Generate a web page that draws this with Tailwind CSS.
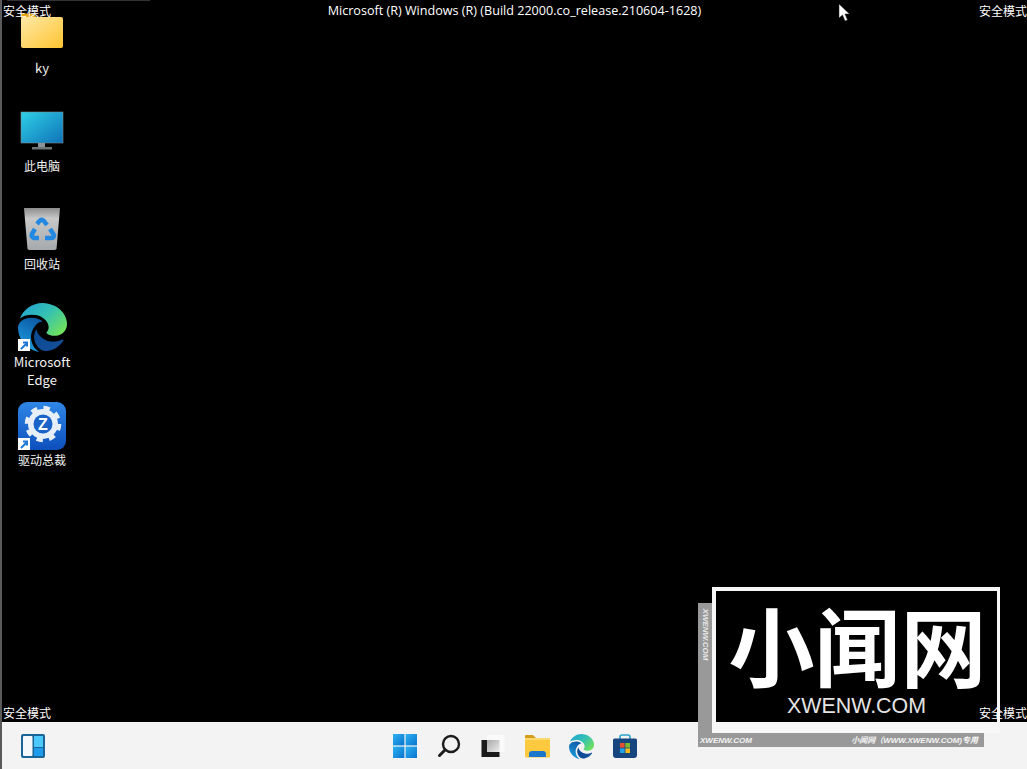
<!DOCTYPE html>
<html lang="zh-CN">
<head>
    <meta charset="UTF-8">
    <title>安全模式</title>
    <script src="https://cdn.jsdelivr.net/npm/@tailwindcss/browser@4"></script>
</head>
<body class="bg-black">
<svg class="absolute w-0 h-0">
    <defs>
        <linearGradient id="edgeTop" x1="0" y1="0" x2="1" y2="0.7"><stop offset="0" stop-color="#1fa2d8"/><stop offset="0.55" stop-color="#35c1b1"/><stop offset="1" stop-color="#6fe05f"/></linearGradient>
        <linearGradient id="edgeLeft" x1="0.7" y1="0" x2="0.3" y2="1"><stop offset="0" stop-color="#0c59a4"/><stop offset="1" stop-color="#1d9fe0"/></linearGradient>
        <linearGradient id="edgeLow" x1="0" y1="0" x2="1" y2="0.4"><stop offset="0" stop-color="#0c4a94"/><stop offset="1" stop-color="#134e99"/></linearGradient>
        <path id="edgeA" d="M21.86 17.86q.14 0 .25.12.1.13.1.25t-.11.33l-.32.46-.43.53-.44.5q-.21.25-.38.42l-.22.23q-.58.53-1.34 1.04-.76.51-1.6.91-.86.4-1.74.64t-1.67.24q-.9 0-1.69-.28-.8-.28-1.48-.78-.68-.5-1.22-1.17-.53-.66-.92-1.44-.38-.77-.58-1.6-.2-.83-.2-1.67 0-1 .32-1.96.33-.97.87-1.8.14.95.55 1.77.41.82 1.02 1.5.6.68 1.38 1.21.78.54 1.64.9.86.36 1.77.56.92.2 1.8.2 1.12 0 2.18-.24 1.06-.23 2.06-.72l.2-.1.2-.05z"/>
        <path id="edgeB" d="M6.36 16.59q0 1.1.27 2.15.27 1.06.78 2.03.51.96 1.24 1.77.74.82 1.66 1.4-1.47-.2-2.8-.74-1.33-.55-2.48-1.37-1.15-.83-2.08-1.9-.92-1.07-1.58-2.33T.36 14.94Q0 13.54 0 12.06q0-.81.32-1.49.31-.68.83-1.23.53-.55 1.2-.96.66-.4 1.35-.66.74-.27 1.5-.39.78-.12 1.55-.12.7 0 1.42.1.72.12 1.4.35.68.23 1.32.57.63.35 1.16.83-.35 0-.7.07-.33.07-.65.23v-.02q-.63.28-1.2.74-.57.46-1.05 1.04-.48.58-.87 1.26-.38.67-.65 1.39-.27.71-.42 1.44-.15.72-.15 1.38z"/>
        <path id="edgeC" d="M11.96.06q1.7 0 3.33.39 1.63.38 3.07 1.15 1.43.77 2.62 1.93 1.18 1.16 1.98 2.7.49.94.76 1.96.28 1 .28 2.08 0 .89-.23 1.7-.24.8-.69 1.48-.45.68-1.1 1.22-.64.53-1.45.88-.54.24-1.11.36-.58.13-1.16.13-.42 0-.97-.03-.54-.03-1.1-.12-.55-.1-1.05-.28-.5-.19-.84-.5-.12-.09-.23-.24-.1-.16-.1-.33 0-.15.16-.35.16-.2.35-.5.2-.28.36-.68.16-.4.16-.95 0-1.06-.4-1.96-.4-.91-1.06-1.64-.66-.74-1.52-1.28-.86-.55-1.79-.89-.84-.3-1.72-.44-.87-.14-1.76-.14-1.55 0-3.06.45T.94 7.55q.71-1.74 1.81-3.13 1.1-1.38 2.52-2.35Q6.68 1.1 8.37.58q1.7-.52 3.58-.52Z"/>
        <linearGradient id="folderBody" x1="0" y1="0" x2="1" y2="1"><stop offset="0" stop-color="#ffe9a8"/><stop offset="1" stop-color="#fdc42f"/></linearGradient>
        <linearGradient id="screen" x1="0" y1="0" x2="1" y2="1"><stop offset="0" stop-color="#2ed0e6"/><stop offset="1" stop-color="#0f72b8"/></linearGradient>
        <linearGradient id="bin" x1="0" y1="0" x2="0" y2="1"><stop offset="0" stop-color="#8c8c8c"/><stop offset="0.25" stop-color="#c8c8c8"/><stop offset="1" stop-color="#a6a9ab"/></linearGradient>
        <linearGradient id="driver" x1="0" y1="0" x2="0" y2="1"><stop offset="0" stop-color="#2f86e6"/><stop offset="1" stop-color="#0d4fbd"/></linearGradient>
        <linearGradient id="startLogo" x1="0" y1="0" x2="1" y2="1"><stop offset="0" stop-color="#2cb2f2"/><stop offset="1" stop-color="#0a74cf"/></linearGradient>
        <linearGradient id="taskGray" x1="0" y1="0" x2="1" y2="1"><stop offset="0" stop-color="#a8a8a8"/><stop offset="1" stop-color="#ececec"/></linearGradient>
        <g id="shortcut">
            <rect width="12" height="12" fill="#fff"/>
            <path d="M3 10 L8 5 M5 3.5 H9 V7.5" fill="none" stroke="#1e78d8" stroke-width="2"/>
        </g>
    </defs>
</svg>

<div class="relative w-[1027px] h-[769px] overflow-hidden flex flex-col font-['Noto_Sans_CJK_SC',sans-serif] text-white">
    <!-- desktop -->
    <main class="h-[722px] shrink-0 bg-black">
        <div class="w-[84px] flex flex-col items-center text-xs leading-[17px] text-center text-[#f2f2f2]">
            <div class="h-[99px] pt-2 flex flex-col items-center">
                <svg class="w-12 h-12 block" viewBox="0 0 48 48">
                    <path d="M3 7 Q3 5.500 5 5.500 H15 L20 10 H3 Z" fill="#e8a713"/>
                    <rect x="3" y="9" width="42" height="31" rx="2" fill="url(#folderBody)"/>
                </svg>
                <span class="mt-[3px] text-[13px]">ky</span>
            </div>
            <div class="h-[98px] pt-2 flex flex-col items-center">
                <svg class="w-12 h-12 block" viewBox="0 0 48 48">
                    <rect x="3" y="5" width="42" height="31" fill="url(#screen)" stroke="#7d8a90" stroke-width="0.6"/>
                    <rect x="20" y="36" width="7" height="4" fill="#8a9498"/>
                    <rect x="14" y="40" width="20" height="2.500" fill="#6f7477"/>
                </svg>
                <span class="mt-[2px]">此电脑</span>
            </div>
            <div class="h-[98px] pt-2 flex flex-col items-center">
                <svg class="w-12 h-12 block" viewBox="0 0 48 48">
                    <path d="M6 3 H42 L38.500 44 Q38 45 36 45 H12 Q10 45 9.500 44 Z" fill="url(#bin)"/>
                    <g fill="none" stroke="#2288e2" stroke-width="4.500" stroke-linejoin="round">
                        <path d="M19 19 L22 15.500 Q24 14 26 16 L29 20"/>
                        <path d="M32 24 L36 30 Q36 33 33 33 H27"/>
                        <path d="M21 33 H16 Q13 32 14 29 L17 24"/>
                    </g>
                </svg>
                <span class="mt-[2px]">回收站</span>
            </div>
            <div class="h-[99px] pt-2 flex flex-col items-center">
                <div class="relative w-12 h-12">
                    <svg class="w-[49px] h-[49px] block" viewBox="0 0 24 24">
                        <use href="#edgeB" fill="url(#edgeLeft)"/>
                        <use href="#edgeA" fill="url(#edgeLow)"/>
                        <use href="#edgeC" fill="url(#edgeTop)"/>
                    </svg>
                    <svg class="absolute left-0 bottom-0 w-3 h-3" viewBox="0 0 12 12"><use href="#shortcut"/></svg>
                </div>
                <span class="mt-[2px] text-[13px] leading-[18px]">Microsoft<br>Edge</span>
            </div>
            <div class="h-[98px] pt-2 flex flex-col items-center">
                <div class="relative w-12 h-12">
                    <svg class="w-12 h-12 block" viewBox="0 0 48 48">
                        <rect width="48" height="48" rx="9" fill="url(#driver)"/>
                        <circle cx="25" cy="22" r="12" fill="none" stroke="#e6eef8" stroke-width="6"/>
                        <circle cx="25" cy="22" r="16" fill="none" stroke="#e6eef8" stroke-width="4.500" stroke-dasharray="6.300 6.270"/>
                        <circle cx="25" cy="22" r="9.500" fill="#1a63c8"/>
                    </svg>
                    <span class="absolute inset-0 flex items-center justify-center pl-[2px] pb-[4px] text-[16px] font-bold text-white font-['Liberation_Sans',sans-serif]">Z</span>
                    <svg class="absolute left-0 bottom-0 w-3 h-3" viewBox="0 0 12 12"><use href="#shortcut"/></svg>
                </div>
                <span class="mt-[1px]">驱动总裁</span>
            </div>
        </div>
    </main>

    <!-- taskbar -->
    <footer class="h-[47px] bg-[#f3f3f3] border-t border-[#f8f8f8] flex items-center">
        <button class="w-11 h-11 ml-[11px] flex items-center justify-center">
            <svg class="w-6 h-6" viewBox="0 0 24 24">
                <rect x="0" y="0" width="24" height="24" rx="2" fill="#1a6596"/>
                <rect x="2" y="2" width="9.500" height="20" rx="1" fill="#f4f8fb"/>
                <rect x="13" y="2" width="9" height="11" fill="#4cc8fb"/>
                <rect x="13" y="14" width="9" height="8" fill="#1e9bea"/>
            </svg>
        </button>
        <div class="ml-[328px] flex items-center">
            <button class="w-11 h-11 flex items-center justify-center">
                <svg class="w-6 h-6" viewBox="0 0 24 24">
                    <rect x="0" y="0" width="11.400" height="11.400" fill="url(#startLogo)"/>
                    <rect x="12.600" y="0" width="11.400" height="11.400" fill="url(#startLogo)"/>
                    <rect x="0" y="12.600" width="11.400" height="11.400" fill="url(#startLogo)"/>
                    <rect x="12.600" y="12.600" width="11.400" height="11.400" fill="url(#startLogo)"/>
                </svg>
            </button>
            <button class="w-11 h-11 flex items-center justify-center">
                <svg class="w-6 h-6" viewBox="0 0 24 24" fill="none" stroke="#1c1c1c">
                    <circle cx="14" cy="10" r="8" stroke-width="2.400"/>
                    <path d="M8 16 L2.500 21.500" stroke-width="3" stroke-linecap="round"/>
                </svg>
            </button>
            <button class="w-11 h-11 flex items-center justify-center">
                <svg class="w-6 h-6" viewBox="0 0 24 24">
                    <rect x="6" y="1" width="17.500" height="17" fill="#fafafa"/>
                    <rect x="6" y="6" width="12.500" height="12" fill="url(#taskGray)"/>
                    <path d="M0.500 6 H6 V18 H18.500 V23 H0.500 Z" fill="#1a1a1a"/>
                </svg>
            </button>
            <button class="w-11 h-11 flex items-center justify-center">
                <svg class="w-[25px] h-[25px]" viewBox="0 0 25 25">
                    <path d="M0 2 Q0 1 1 1 H8 L11 4 H0 Z" fill="#d39c1a"/>
                    <rect x="0" y="4" width="25" height="19.500" rx="1" fill="#fcc93f"/>
                    <path d="M0 4 H25 V6 H0 Z" fill="#fbd96f"/>
                    <path d="M4 23 V20 Q4 17 7 17 H18 Q21 17 21 20 V23 Z" fill="#1b77cc"/>
                </svg>
            </button>
            <button class="w-11 h-11 flex items-center justify-center">
                <svg class="w-[25px] h-[25px]" viewBox="0 0 24 24">
                    <use href="#edgeB" fill="url(#edgeLeft)"/>
                    <use href="#edgeA" fill="url(#edgeLow)"/>
                    <use href="#edgeC" fill="url(#edgeTop)"/>
                </svg>
            </button>
            <button class="w-11 h-11 flex items-center justify-center">
                <svg class="w-6 h-6" viewBox="0 0 24 24">
                    <path d="M7 5 V3 Q7 1 9 1 H15 Q17 1 17 3 V5" fill="none" stroke="#2aa3c9" stroke-width="1.600"/>
                    <path d="M0 6 Q0 4.500 1.500 4.500 H22.500 Q24 4.500 24 6 V21 Q24 24 21 24 H3 Q0 24 0 21 Z" fill="#17467f"/>
                    <rect x="7" y="9" width="4.600" height="4.600" fill="#e8502f"/>
                    <rect x="12.400" y="9" width="4.600" height="4.600" fill="#7dbb2c"/>
                    <rect x="7" y="14.400" width="4.600" height="4.600" fill="#1ea1e6"/>
                    <rect x="12.400" y="14.400" width="4.600" height="4.600" fill="#f5b81d"/>
                </svg>
            </button>
        </div>
    </footer>

    <!-- overlays -->
    <div class="absolute left-0 top-0 bottom-0 w-[2px] bg-[#5a5a5a]"></div>
    <div class="absolute left-[7px] top-0 w-[143px] h-[1px] bg-[#333]"></div>
    <span class="absolute left-[3px] top-[2px] text-xs leading-[17px]">安全模式</span>
    <span class="absolute right-0 top-[2px] text-xs leading-[17px]">安全模式</span>
    <span class="absolute left-[3px] top-[704px] text-xs leading-[17px]">安全模式</span>
    <p class="absolute left-[327px] top-[2px] w-[375px] text-center text-[12.6px] leading-[17px] whitespace-nowrap font-['Open_Sans',sans-serif]">Microsoft (R) Windows (R) (Build 22000.co_release.210604-1628)</p>

    <svg class="absolute left-[838px] top-[3px] w-[13px] h-[19px]" viewBox="0 0 13 19">
        <path d="M1 1 V15 L4.500 12 L7 18 L9.500 17 L7 11 H11.500 Z" fill="#fff" stroke="#222" stroke-width="0.500"/>
    </svg>

    <!-- watermark -->
    <div class="absolute left-[698px] top-[603px] w-[286px] h-[144px] bg-[#999]">
        <span class="absolute left-[-23px] top-[27px] w-[60px] rotate-90 text-[8px] leading-[9px] text-center italic font-bold text-white/80 font-['Liberation_Sans',sans-serif]">XWENW.COM</span>
        <div class="absolute left-[2px] right-[6px] bottom-[1px] h-[11px] flex items-center justify-between text-[8px] leading-[11px] italic font-bold text-white/90 font-['Liberation_Sans','Noto_Sans_CJK_SC',sans-serif]">
            <span>XWENW.COM</span>
            <span>小闻网（WWW.XWENW.COM)专用</span>
        </div>
    </div>
    <div class="absolute left-[712px] top-[587px] w-[288px] h-[146px] bg-[#f7f7f7] pt-1 pl-1 pr-[3px] pb-[11px]">
        <div class="h-full bg-black flex flex-col items-center">
            <div class="mt-[11px] ml-[2px] text-[86px] leading-[84px] font-bold text-white whitespace-nowrap">小闻网</div>
            <div class="mt-[8px] text-[21.4px] leading-[25px] text-[#e4e4e4] font-['Liberation_Sans',sans-serif]">XWENW.COM</div>
        </div>
    </div>
    <span class="absolute right-0 top-[704px] text-xs leading-[17px]">安全模式</span>
</div>
</body>
</html>
